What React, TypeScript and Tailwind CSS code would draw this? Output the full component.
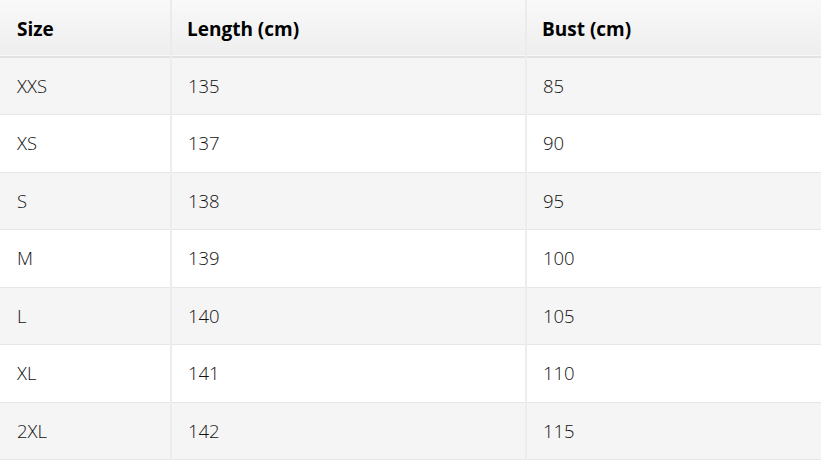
import React from "react";

const rows = [
  ["XXS", "135", "85"],
  ["XS", "137", "90"],
  ["S", "138", "95"],
  ["M", "139", "100"],
  ["L", "140", "105"],
  ["XL", "141", "110"],
  ["2XL", "142", "115"],
];

export default function App() {
  return (
    <div className="w-[821px] h-[461px] bg-white" style={{ fontFamily: '"Open Sans", "Noto Sans", sans-serif' }}>
      <table className="w-full border-collapse text-[18.5px] font-light text-[#111]">
        <thead>
          <tr className="h-[57px] bg-gradient-to-b from-[#f9f9f9] to-[#eeeeee] border-b-2 border-[#e2e2e2]">
            <th className="w-[171px] text-left font-bold pl-[17px] pt-[2px] text-[19px] text-black">Size</th>
            <th className="w-[355px] text-left font-bold pl-[15px] pt-[2px] text-[19px] text-black border-l-2 border-[#ebebeb]">Length (cm)</th>
            <th className="text-left font-bold pl-[15px] pt-[2px] text-[19px] text-black border-l-2 border-[#ebebeb]">Bust (cm)</th>
          </tr>
        </thead>
        <tbody>
          {rows.map((r, i) => (
            <tr key={r[0]} className={`h-[57.5px] border-b border-[#e6e6e6] ${i % 2 === 0 ? "bg-[#f5f5f5]" : "bg-white"}`}>
              <td className="pl-[17px]">{r[0]}</td>
              <td className="pl-[16px] border-l-2 border-[#ededed]">{r[1]}</td>
              <td className="pl-[16px] border-l-2 border-[#ededed]">{r[2]}</td>
            </tr>
          ))}
        </tbody>
      </table>
    </div>
  );
}
